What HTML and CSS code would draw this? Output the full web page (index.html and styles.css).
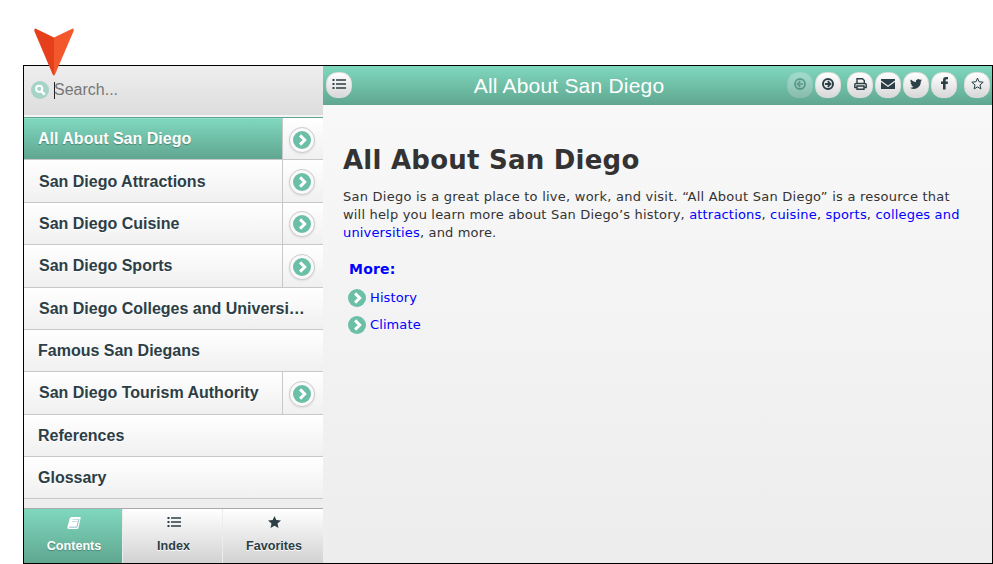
FILE: index.html
```html
<!DOCTYPE html>
<html lang="en">
<head>
<meta charset="utf-8">
<title>All About San Diego</title>
<link rel="stylesheet" href="styles.css">
</head>
<body>
<svg class="defs" width="0" height="0">
  <symbol id="chev" viewBox="0 0 18 18"><circle cx="9" cy="9" r="9" fill="#6bbfa7"/><path d="M7.1 4.4 11.7 9 7.1 13.6" fill="none" stroke="#fff" stroke-width="3"/></symbol>
  <symbol id="list" viewBox="0 0 14 12"><path d="M.5 1h2v2h-2zM.5 5h2v2h-2zM.5 9h2v2h-2zM4 1.200h10v1.500H4zM4 5.200h10v1.500H4zM4 9.200h10v1.500H4z" fill="#2c3e46"/></symbol>
</svg>
<svg class="pointer" width="42" height="48" viewBox="0 0 42 48"><path d="M2.400.6 21 9.500V47.500Q20.500 47.500 19.500 46L1.300 3Q1 .6 2.400.6z" fill="#e53f1c"/><path d="M39.800.6 21 9.500V47.500Q21.500 47.500 22.200 46L40.600 3Q41.200.4 39.800.6z" fill="#f4572b"/></svg>
<div class="frame">
  <aside class="side">
    <div class="search">
      <svg width="18" height="18" viewBox="0 0 18 18"><circle cx="9" cy="9" r="9" fill="#a5d4c6"/><circle cx="8.200" cy="7.800" r="3.100" fill="none" stroke="#fff" stroke-width="2"/><path d="m10.500 10.300 3.200 3.300" stroke="#fff" stroke-width="2.400"/></svg>
      <span class="caret"></span><span class="placeholder">Search...</span>
    </div>
    <nav class="toc">
      <div class="row active"><span class="label">All About San Diego</span><span class="open"><i><svg><use href="#chev"/></svg></i></span></div>
      <div class="row low"><span class="label san">San Diego Attractions</span><span class="open"><i><svg><use href="#chev"/></svg></i></span></div>
      <div class="row"><span class="label san">San Diego Cuisine</span><span class="open"><i><svg><use href="#chev"/></svg></i></span></div>
      <div class="row"><span class="label san">San Diego Sports</span><span class="open"><i><svg><use href="#chev"/></svg></i></span></div>
      <div class="row"><span class="label san">San Diego Colleges and Universi…</span></div>
      <div class="row"><span class="label">Famous San Diegans</span></div>
      <div class="row"><span class="label san">San Diego Tourism Authority</span><span class="open"><i><svg><use href="#chev"/></svg></i></span></div>
      <div class="row"><span class="label">References</span></div>
      <div class="row"><span class="label">Glossary</span></div>
    </nav>
    <div class="tabs">
      <div class="tab on"><svg width="14" height="14" viewBox="0 0 14 14"><path d="M4.500 1H13Q14 1 13.700 2L11.500 11.500Q11.200 13 10 13H1.800Q0 13 .4 11.300L2.700 2.500Q3.200 1 4.500 1z" fill="#fff"/><path d="M5.500 3.500h5.500M5 5.500h5.500" stroke="#b5ddd1" stroke-width=".8"/><path d="M2 11.200h7.800L12 3" fill="none" stroke="#8fb5c4" stroke-width=".9"/></svg><span>Contents</span></div>
      <div class="tab"><svg width="14" height="12"><use href="#list"/></svg><span>Index</span></div>
      <div class="tab"><svg width="13" height="12" viewBox="0 0 13 12"><path d="M6.500 0 8.300 4 13 4.500 9.500 7.500 10.500 12 6.500 9.700 2.500 12 3.500 7.500 0 4.500 4.700 4z" fill="#2c3e46"/></svg><span>Favorites</span></div>
    </div>
  </aside>
  <main class="main">
    <header class="bar">
      <span class="btn menu"><svg width="14" height="12"><use href="#list"/></svg></span>
      <span class="title">All About San Diego</span>
      <span class="btn off"><svg width="12" height="12" viewBox="0 0 12 12"><circle cx="6" cy="6" r="5" fill="none" stroke="#2c3e46" stroke-width="1.800"/><path d="M9 6H4M6.300 3.200 3.500 6l2.800 2.800" fill="none" stroke="#2c3e46" stroke-width="1.700"/></svg></span>
      <span class="btn gap6"><svg width="12" height="12" viewBox="0 0 12 12"><circle cx="6" cy="6" r="5" fill="none" stroke="#2c3e46" stroke-width="2"/><path d="M3 6h5M5.700 3.200 8.500 6 5.700 8.800" fill="none" stroke="#2c3e46" stroke-width="1.800"/></svg></span>
      <span class="btn"><svg width="13" height="12" viewBox="0 0 13 12"><path d="M3 6V.7h5.500L10.300 2.500V6M3 9.500H.8V6.500Q.8 5.500 2 5.500h9q1.200 0 1.200 1v3H10M3 8h7v3.300H3z" fill="none" stroke="#2c3e46" stroke-width="1.400"/></svg></span>
      <span class="btn"><svg width="14" height="12" viewBox="0 0 14 12"><path d="M0 1h14v1.500L7 7.500 0 2.500zM0 4l7 5 7-5v7H0z" fill="#2c3e46"/></svg></span>
      <span class="btn"><svg width="12" height="12" viewBox="0 0 24 24"><path d="M24 4.500a10 10 0 0 1-2.800.8 5 5 0 0 0 2.100-2.700 10 10 0 0 1-3.100 1.200 4.920 4.920 0 0 0-8.400 4.500A14 14 0 0 1 1.700 3.100a4.900 4.900 0 0 0 1.500 6.600 5 5 0 0 1-2.200-.6c0 2.300 1.600 4.400 3.900 4.900a5 5 0 0 1-2.200.1 4.900 4.900 0 0 0 4.600 3.400A9.900 9.900 0 0 1 0 19.500 14 14 0 0 0 21.500 7.100 10 10 0 0 0 24 4.500z" fill="#2c3e46"/></svg></span>
      <span class="btn gap7"><svg width="7" height="13" viewBox="0 0 7 13"><path d="M7 .1v2.100H5.600Q4.600 2.200 4.600 3.200V4.600H7L6.700 6.900H4.600V12.500H2V6.900H0V4.600H2V3Q2 0 5 0z" fill="#2c3e46"/></svg></span>
      <span class="btn"><svg width="13" height="13" viewBox="0 0 13 13"><path d="M6.500 1 8 4.700l4.200.5L9 7.900l.9 4.100-3.400-2.100L3.100 12 4 7.900.8 5.200 5 4.700z" fill="none" stroke="#2c3e46" stroke-width="1"/></svg></span>
    </header>
    <article class="body">
      <h1>All About San Diego</h1>
      <p><span class="l1">San Diego is a great place to live, work, and visit. “All About San Diego” is a resource that</span><br><span class="l2">will help you learn more about San Diego’s history, <a>attractions</a>, <a>cuisine</a>, <a>sports</a>, <a>colleges and</a></span><br><span class="l3"><a>universities</a>, and more.</span></p>
      <h2>More:</h2>
      <div class="more"><svg><use href="#chev"/></svg><a>History</a></div>
      <div class="more"><svg><use href="#chev"/></svg><a>Climate</a></div>
    </article>
  </main>
</div>
</body>
</html>
```
FILE: styles.css
```css
* { box-sizing: border-box; }
body { margin: 0; width: 993px; height: 564px; padding: 65px 0 0 23px; background: #fff; overflow: hidden; font-family: "Liberation Sans", Arial, sans-serif; color: #2c3e46; }
svg { display: block; flex: none; }
.defs { position: absolute; }
.pointer { position: absolute; left: 33px; top: 28px; z-index: 2; }
.frame { width: 970px; height: 499px; border: 1px solid #000; display: flex; background: linear-gradient(#f9f9f9, #ededed); }
.side { width: 299px; display: flex; flex-direction: column; background: #eee; }
.search { height: 52px; border-bottom: 1px solid #5fa692; background: linear-gradient(#eee, #ddd 49px, #f4f4f4 49px); display: flex; align-items: center; padding: 0 0 3px 7px; font-size: 16px; color: #777; }
.caret { width: 1px; height: 17px; background: #222; margin: 0 0 0 5px; }
.placeholder { margin-left: -1px; }
.toc { display: grid; grid-template-rows: 42px 43px 42px 43px 42px 42px 43px 42px 42px; }
.row { display: flex; border-bottom: 1px solid #c8c8c8; background: linear-gradient(#fff, #f0f0f0); min-width: 0; }
.label { flex: 1; display: flex; align-items: center; padding-left: 14px; font-weight: bold; font-size: 16px; white-space: nowrap; text-shadow: 0 1px 0 #fff; }
.san { padding-left: 15px; }
.low .label { padding-top: 1px; }
.active .label { background: linear-gradient(#7fd8be, #60a690); border-top: 1px solid #8fe0c9; color: #fff; text-shadow: 0 1px 1px #4b8574; }
.open { width: 41px; border-left: 1px solid #c8c8c8; display: flex; align-items: center; padding: 1px 0 0 6px; }
.active .open { padding-top: 3px; }
.open i { width: 26px; height: 26px; border: 1px solid #ccc; border-radius: 50%; background: #fafafa; box-shadow: 0 1px 2px #ddd; display: grid; place-items: center; }
.open svg, .more svg { width: 18px; height: 18px; }
.tabs { margin-top: auto; height: 55px; border-top: 1px solid #aaa; display: grid; grid-template-columns: 98px 100px 101px; }
.tab { display: flex; flex-direction: column; align-items: center; padding: 7px 0 0 2px; background: linear-gradient(#fff, #d2d2d2); border-left: 1px solid #ececec; font-size: 12.6px; font-weight: bold; text-shadow: 0 1px 0 #fff; }
.tab span { margin-top: 11px; line-height: 15px; }
.tab.on { background: linear-gradient(#7fd8be, #60a690); border-left: 0; color: #fff; text-shadow: 0 1px 1px #4b8574; padding-left: 2px; }
.tab.on span { margin-top: 9px; }
.main { flex: 1; min-width: 0; }
.bar { height: 39px; display: flex; align-items: flex-start; gap: 2px; padding: 6px 2px 0 3px; background: linear-gradient(#7fd8be, #60a690); }
.btn { width: 26px; height: 26px; flex: none; border-radius: 11px; border: 1px solid #ddd; background: linear-gradient(#fff, #d8d8d8); display: grid; place-items: center; padding-bottom: 3px; }
.off { opacity: .3; }
.gap6 { margin-right: 4px; }
.gap7 { margin-right: 5px; }
.title { flex: 1; text-align: center; font-size: 21px; line-height: 27px; color: #fff; padding-right: 1px; letter-spacing: .2px; }
.body { padding: 38px 0 0 20px; font-family: Verdana, "DejaVu Sans", sans-serif; color: #333; }
h1 { margin: 0; font-size: 26px; line-height: 34px; letter-spacing: .24px; }
p { margin: 11px 0 0; font-size: 13px; line-height: 18px; white-space: nowrap; }
.l1 { letter-spacing: .24px; }
.l2 { letter-spacing: .18px; }
.l3 { letter-spacing: .16px; }
a { color: #00f; }
h2 { margin: 18px 0 6px 6px; font-size: 14px; line-height: 18px; letter-spacing: .2px; color: #00f; }
.more { display: flex; align-items: center; gap: 4px; height: 27px; padding-left: 5px; font-size: 13px; letter-spacing: .1px; }
```
